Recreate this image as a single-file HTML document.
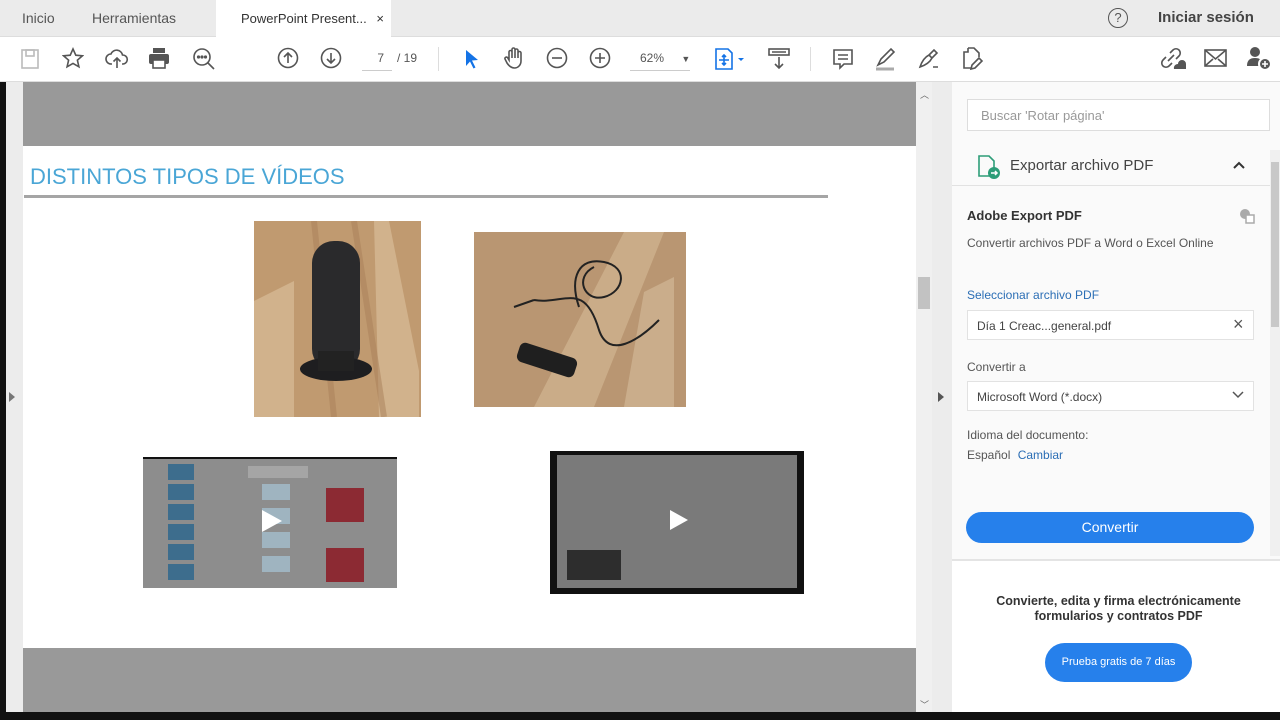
<!DOCTYPE html>
<html><head><meta charset="utf-8"><style>
*{margin:0;padding:0;box-sizing:border-box}
body{width:1280px;height:720px;overflow:hidden;background:#fff;font-family:"Liberation Sans",sans-serif;position:relative;color:#333}
.a{position:absolute}
.t{font-size:14px;color:#555}
svg.i{position:absolute;fill:none;stroke:#555;stroke-width:1.6}
</style></head><body>
<div class="a" style="left:0;top:0;width:1280px;height:37px;background:#ebebeb;border-bottom:1px solid #ddd"></div>
<div class="a t" style="left:22px;top:10px;font-size:14px">Inicio</div>
<div class="a t" style="left:92px;top:10px;font-size:14px">Herramientas</div>
<div class="a" style="left:216px;top:0;width:175px;height:38px;background:#fff"></div>
<div class="a" style="left:241px;top:11px;font-size:13px;color:#333">PowerPoint Present... <span style="margin-left:6px;font-size:13px">×</span></div>
<div class="a" style="left:1108px;top:8px;width:20px;height:20px;border:1.5px solid #555;border-radius:50%;font-size:13px;text-align:center;line-height:17px;color:#555">?</div>
<div class="a" style="left:1158px;top:9px;font-size:15px;font-weight:bold;color:#444">Iniciar sesión</div>
<div class="a" style="left:0;top:38px;width:1280px;height:44px;background:#fff;border-bottom:1px solid #ddd"></div>
<svg class="i" style="left:20px;top:48px;stroke:#bbb" width="20" height="22"><rect x="2" y="2" width="16" height="18"/><rect x="6" y="2" width="8" height="6"/></svg>
<svg class="i" style="left:62px;top:47px" width="22" height="22"><path d="M11 2l2.8 6.2 6.6.6-5 4.4 1.5 6.6L11 16.4 5.1 19.8l1.5-6.6-5-4.4 6.6-.6z"/></svg>
<svg class="i" style="left:105px;top:47px" width="24" height="24"><path d="M7 17H6a5 5 0 010-10 6 6 0 0111.5 1A4.5 4.5 0 0118 17h-1M12 21V11M8.5 14.5L12 11l3.5 3.5"/></svg>
<svg class="i" style="left:148px;top:47px;fill:#555;stroke:none" width="22" height="22"><rect x="5" y="1" width="12" height="5"/><rect x="1" y="7" width="20" height="10" rx="2"/><rect x="5" y="13" width="12" height="8" fill="#fff" stroke="#555"/></svg>
<svg class="i" style="left:192px;top:47px" width="24" height="24"><circle cx="10" cy="10" r="8"/><path d="M16 16l6 6"/><circle cx="6.5" cy="10" r=".8" fill="#555"/><circle cx="10" cy="10" r=".8" fill="#555"/><circle cx="13.5" cy="10" r=".8" fill="#555"/></svg>
<svg class="i" style="left:277px;top:47px" width="24" height="24"><circle cx="11" cy="11" r="9.5"/><path d="M11 16V6M7 10l4-4 4 4"/></svg>
<svg class="i" style="left:320px;top:47px" width="24" height="24"><circle cx="11" cy="11" r="9.5"/><path d="M11 6v10M7 12l4 4 4-4"/></svg>
<div class="a" style="left:362px;top:51px;width:30px;font-size:12px;color:#555;text-align:right;border-bottom:1px solid #ccc;padding-right:8px;height:20px">7</div>
<div class="a" style="left:397px;top:51px;font-size:12px;color:#555">/ 19</div>
<div class="a" style="left:438px;top:47px;width:1px;height:24px;background:#ddd"></div>
<svg class="i" style="left:462px;top:48px;fill:#1473e6;stroke:none" width="18" height="22"><path d="M4 2l12 10-6 .5 3.5 7-2 1-3.5-7L4 18z"/></svg>
<svg class="i" style="left:503px;top:46px" width="22" height="24"><path d="M6 14V6a1.5 1.5 0 013 0v6V3.5a1.5 1.5 0 013 0V12V4.5a1.5 1.5 0 013 0V12V7a1.5 1.5 0 013 0v8c0 4-3 7-6.5 7S6 20 4 17l-2-4a1.5 1.5 0 012.5-1.5z"/></svg>
<svg class="i" style="left:546px;top:47px" width="24" height="24"><circle cx="11" cy="11" r="9.5"/><path d="M6 11h10"/></svg>
<svg class="i" style="left:589px;top:47px" width="24" height="24"><circle cx="11" cy="11" r="9.5"/><path d="M6 11h10M11 6v10"/></svg>
<div class="a" style="left:630px;top:51px;width:60px;font-size:12px;color:#555;border-bottom:1px solid #ccc;height:20px;padding-left:10px;white-space:nowrap">62% <span style="margin-left:14px;font-size:9px">▼</span></div>
<svg class="i" style="left:714px;top:47px;stroke:#1473e6" width="32" height="24"><path d="M2 2h12l4 4v16H2z"/><path d="M10 8v10M5 13h10M8 10l2-2 2 2M8 16l2 2 2-2"/><path d="M24 11l3 3 3-3" fill="#1473e6" stroke="none"/></svg>
<svg class="i" style="left:767px;top:47px" width="24" height="24"><rect x="2" y="2" width="20" height="6"/><path d="M5 5h14M12 10v11M8 17l4 4 4-4"/></svg>
<div class="a" style="left:810px;top:47px;width:1px;height:24px;background:#ddd"></div>
<svg class="i" style="left:832px;top:48px" width="22" height="22"><path d="M2 2h18v14h-8l-4 4v-4H2z"/><path d="M6 7h10M6 11h10"/></svg>
<svg class="i" style="left:874px;top:47px" width="24" height="24"><path d="M4 18l3-6L17 2l3 3-10 10z"/><path d="M2 22h18" stroke="#aaa" stroke-width="3"/></svg>
<svg class="i" style="left:917px;top:47px" width="24" height="24"><path d="M3 20c2-6 5-10 9-12l3 3c-2 4-6 7-12 9zM12 8l5-5 3 3-5 5M16 20h5"/></svg>
<svg class="i" style="left:960px;top:46px" width="26" height="26"><path d="M8 2h6l5 5v4M8 2v4H4v16h8M19 12l-7 7-1 4 4-1 7-7z"/></svg>
<svg class="i" style="left:1160px;top:47px" width="26" height="24"><path d="M10 6l3-3a4 4 0 016 6l-3 3M12 16l-3 3a4 4 0 01-6-6l3-3M8 14l6-6"/><path d="M14 22a4 4 0 014-5 4 4 0 018 0v5z" fill="#555" stroke="none"/></svg>
<svg class="i" style="left:1204px;top:49px" width="24" height="20"><rect x="1" y="1" width="21" height="16"/><path d="M1 1l10.5 9L22 1M1 17l8-7M22 17l-8-7"/></svg>
<svg class="i" style="left:1246px;top:46px;fill:#555;stroke:none" width="28" height="26"><circle cx="9" cy="6" r="5"/><path d="M1 20c0-6 3-8 8-8s8 2 8 8z"/><circle cx="19" cy="18" r="6" stroke="#fff" stroke-width="2"/><path d="M16 18h6M19 15v6" stroke="#fff" stroke-width="1.6"/></svg>
<div class="a" style="left:0;top:82px;width:6px;height:638px;background:#111"></div>
<div class="a" style="left:6px;top:82px;width:17px;height:630px;background:#ececec"></div>
<div class="a" style="left:9px;top:392px;width:0;height:0;border-top:5px solid transparent;border-bottom:5px solid transparent;border-left:6px solid #777"></div>
<div class="a" style="left:23px;top:82px;width:893px;height:630px;background:#999"></div>
<div class="a" style="left:23px;top:146px;width:893px;height:502px;background:#fff"></div>
<div class="a" style="left:30px;top:164px;font-size:22px;color:#4aa6d6">DISTINTOS TIPOS DE VÍDEOS</div>
<div class="a" style="left:24px;top:195px;width:804px;height:3px;background:#a5a5a5"></div>
<svg class="a" style="left:254px;top:221px" width="167" height="196"><rect width="167" height="196" fill="#c09a70"/><path d="M0 80l40-20v140H0zM120 0h15l30 150v46h-40z" fill="#d8bc98" opacity=".7"/><path d="M60 0l20 196M100 0l30 196" stroke="#a98059" stroke-width="6" opacity=".5"/><rect x="58" y="20" width="48" height="130" rx="22" fill="#2a2a2c"/><ellipse cx="82" cy="148" rx="36" ry="12" fill="#1e1e20"/><rect x="64" y="130" width="36" height="20" fill="#222"/></svg>
<svg class="a" style="left:474px;top:232px" width="212" height="175"><rect width="212" height="175" fill="#b99672"/><path d="M150 0h40L120 175H60z" fill="#d2b592" opacity=".7"/><path d="M170 60l30-15v130h-50z" fill="#d6bd9c" opacity=".6"/><path d="M105 75c-10-30 0-50 25-45s20 30 0 35-30-20-10-30M60 68c30 5 50-20 65 30 10 30 40 10 60-10M40 75l20-7" stroke="#222" stroke-width="2" fill="none"/><rect x="43" y="118" width="60" height="20" rx="6" fill="#1f1f1f" transform="rotate(18 73 128)"/></svg>
<div class="a" style="left:143px;top:457px;width:254px;height:131px;background:#8d8d8d;border-top:2px solid #111"></div>
<div class="a" style="left:168px;top:464px;width:26px;height:120px;background:repeating-linear-gradient(#3d6d8d 0 16px,transparent 16px 20px)"></div>
<div class="a" style="left:248px;top:466px;width:60px;height:12px;background:#a5a5a5"></div>
<div class="a" style="left:262px;top:484px;width:28px;height:96px;background:repeating-linear-gradient(#9fb4c0 0 16px,transparent 16px 24px)"></div>
<div class="a" style="left:326px;top:488px;width:38px;height:34px;background:#8c2a33"></div>
<div class="a" style="left:326px;top:548px;width:38px;height:34px;background:#8c2a33"></div>
<div class="a" style="left:262px;top:510px;width:0;height:0;border-top:11px solid transparent;border-bottom:11px solid transparent;border-left:20px solid #fff"></div>
<div class="a" style="left:550px;top:451px;width:254px;height:143px;background:#111"></div>
<div class="a" style="left:557px;top:455px;width:240px;height:133px;background:#7a7a7a"></div>
<div class="a" style="left:567px;top:550px;width:54px;height:30px;background:#2d2d2d"></div>
<div class="a" style="left:670px;top:510px;width:0;height:0;border-top:10px solid transparent;border-bottom:10px solid transparent;border-left:18px solid #fff"></div>
<div class="a" style="left:916px;top:82px;width:16px;height:630px;background:#f0f0f0"></div>
<div class="a" style="left:918px;top:277px;width:12px;height:32px;background:#c2c2c2"></div>
<div class="a" style="left:920px;top:88px;font-size:9px;color:#666">︿</div>
<div class="a" style="left:920px;top:698px;font-size:9px;color:#666">﹀</div>
<div class="a" style="left:932px;top:82px;width:20px;height:630px;background:#ececec"></div>
<div class="a" style="left:938px;top:392px;width:0;height:0;border-top:5px solid transparent;border-bottom:5px solid transparent;border-left:6px solid #555"></div>
<div class="a" style="left:952px;top:82px;width:328px;height:478px;background:#fafafa"></div>
<div class="a" style="left:967px;top:99px;width:303px;height:32px;background:#fff;border:1px solid #ddd;font-size:13px;color:#999;padding:8px 13px">Buscar 'Rotar página'</div>
<svg class="a" style="left:976px;top:154px" width="26" height="26"><path d="M3 2h10l5 5v15H3z" fill="none" stroke="#2d9d78" stroke-width="1.6"/><circle cx="18" cy="19" r="6" fill="#2d9d78"/><path d="M15 19h6M19 17l2 2-2 2" stroke="#fff" stroke-width="1.5" fill="none"/></svg>
<div class="a" style="left:1010px;top:157px;font-size:15px;color:#444">Exportar archivo PDF</div>
<svg class="a" style="left:1232px;top:160px" width="14" height="10"><path d="M2 8l5-5 5 5" stroke="#333" stroke-width="2" fill="none"/></svg>
<div class="a" style="left:952px;top:185px;width:318px;height:1px;background:#e2e2e2"></div>
<div class="a" style="left:967px;top:208px;font-size:13px;font-weight:bold;color:#333">Adobe Export PDF</div>
<svg class="a" style="left:1238px;top:207px" width="18" height="18"><circle cx="7" cy="7" r="5" fill="#aaa"/><rect x="8" y="8" width="8" height="8" fill="#fff" stroke="#aaa" stroke-width="1.5"/></svg>
<div class="a" style="left:967px;top:236px;font-size:12px;color:#555">Convertir archivos PDF a Word o Excel Online</div>
<div class="a" style="left:967px;top:288px;font-size:12px;color:#2b6eb5">Seleccionar archivo PDF</div>
<div class="a" style="left:967px;top:310px;width:287px;height:30px;background:#fff;border:1px solid #e2e2e2;font-size:12px;color:#444;padding:8px 9px">Día 1 Creac...general.pdf</div>
<div class="a" style="left:1233px;top:314px;font-size:18px;color:#555">×</div>
<div class="a" style="left:967px;top:360px;font-size:12px;color:#555">Convertir a</div>
<div class="a" style="left:967px;top:381px;width:287px;height:30px;background:#fff;border:1px solid #e2e2e2;font-size:12px;color:#444;padding:8px 9px">Microsoft Word (*.docx)</div>
<svg class="a" style="left:1232px;top:391px" width="12" height="8"><path d="M1 1l5 5 5-5" stroke="#555" stroke-width="1.5" fill="none"/></svg>
<div class="a" style="left:967px;top:428px;font-size:12px;color:#555">Idioma del documento:</div>
<div class="a" style="left:967px;top:448px;font-size:12px;color:#555">Español <span style="color:#2b6eb5;margin-left:4px">Cambiar</span></div>
<div class="a" style="left:966px;top:512px;width:288px;height:31px;background:#2680eb;border-radius:16px;color:#fff;font-size:14px;text-align:center;line-height:31px">Convertir</div>
<div class="a" style="left:1270px;top:150px;width:10px;height:406px;background:#f0f0f0"></div>
<div class="a" style="left:1271px;top:162px;width:8px;height:165px;background:#c8c8c8"></div>
<div class="a" style="left:952px;top:559px;width:328px;height:2px;background:#e4e4e4"></div>
<div class="a" style="left:952px;top:561px;width:328px;height:151px;background:#fff"></div>
<div class="a" style="left:952px;top:594px;width:333px;text-align:center;font-size:12.5px;font-weight:bold;color:#333;line-height:15px">Convierte, edita y firma electrónicamente<br>formularios y contratos PDF</div>
<div class="a" style="left:1045px;top:643px;width:147px;height:39px;background:#2680eb;border-radius:20px;color:#fff;font-size:11px;text-align:center;line-height:39px">Prueba gratis de 7 días</div>
<div class="a" style="left:0;top:712px;width:1280px;height:8px;background:#111"></div>
</body></html>
